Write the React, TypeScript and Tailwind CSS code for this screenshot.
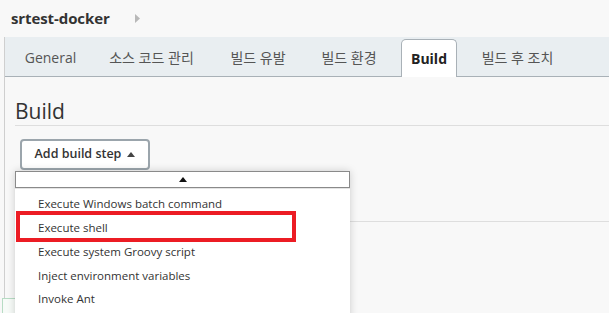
import React from "react";

const tabs = [
  { label: "General", w: "w-[67px]" },
  { label: "소스 코드 관리", w: "w-[109px]" },
  { label: "빌드 유발", w: "w-[78px]" },
  { label: "빌드 환경", w: "w-[78px]" },
  { label: "Build", w: "w-[56px]", active: true },
  { label: "빌드 후 조치", w: "w-[95px]" },
];

const items = [
  "Execute Windows batch command",
  "Execute shell",
  "Execute system Groovy script",
  "Inject environment variables",
  "Invoke Ant",
];

export default function App() {
  return (
    <div
      className="relative w-[609px] h-[313px] overflow-hidden bg-[#f8f8f8] text-[#333]"
      style={{ fontFamily: '"Open Sans", "Noto Sans CJK KR", sans-serif' }}
    >
      {/* top bar */}
      <div className="h-[37px] flex items-center pl-[11px]">
        <span className="text-[15px] font-bold text-[#333] tracking-[-0.1px]">srtest-docker</span>
        <svg width="5" height="9" viewBox="0 0 5 9" className="ml-[25px] mt-[-1px]">
          <path d="M0 0 L5 4.5 L0 9 Z" fill="#b8b8b8" />
        </svg>
      </div>

      <div className="ml-[4px] border-l border-[#cfcfcf] h-[276px]">
        {/* tab bar */}
        <div className="h-[40px] bg-[#e9eef1] border-b border-[#a9b1b7] flex items-end pl-[12px] gap-[13px]">
          {tabs.map((t) =>
            t.active ? (
              <div
                key={t.label}
                className={`${t.w} h-[38px] -mb-px bg-white border border-b-0 border-[#a9b1b7] rounded-t-[5px] flex items-center justify-center text-[14px] font-bold text-[#222]`}
              >
                {t.label}
              </div>
            ) : (
              <div
                key={t.label}
                className={`${t.w} h-[37px] flex items-center justify-center text-[14px] text-[#555]`}
              >
                {t.label}
              </div>
            )
          )}
        </div>

        {/* content */}
        <div className="pl-[10px] relative">
          <div className="pt-[20px] h-[49px] border-b border-[#dedede] text-[21px] leading-[28px] text-[#333]">
            Build
          </div>
          <div className="relative h-[96px] border-b border-[#dedede]">
            <div className="absolute left-[5px] top-[13px] w-[130px] h-[31px] border-2 border-[#9ba5ac] rounded-[4px] bg-white flex items-center justify-center gap-[6px] text-[12.5px] font-semibold text-[#333]">
              <span>Add build step</span>
              <svg width="8" height="5" viewBox="0 0 8 5">
                <path d="M0 5 L4 0 L8 5 Z" fill="#444" />
              </svg>
            </div>
          </div>

          {/* dropdown menu */}
          <div className="absolute left-[10px] top-[94px] w-[335px] z-10 shadow-[0_0_8px_rgba(0,0,0,0.18)] bg-white">
            <div className="h-[17px] border border-[#8a8a8a] flex items-center justify-center">
              <svg width="8" height="5" viewBox="0 0 8 5">
                <path d="M0 5 L4 0 L8 5 Z" fill="#111" />
              </svg>
            </div>
            <div className="border-t border-[#e4e4e4] pt-[3px] h-[140px]">
              {items.map((it, i) => (
                <div
                  key={it}
                  className="relative h-[23.75px] flex items-center pl-[23px] text-[11.5px] text-[#333]"
                >
                  {i === 1 && (
                    <div className="absolute left-[1px] top-0 w-[280px] h-[31px] -mt-[5px] border-[4px] border-[#ec1c24]" />
                  )}
                  <span className="relative">{it}</span>
                </div>
              ))}
            </div>
          </div>
        </div>
      </div>

      {/* partial green box bottom-left */}
      <div className="absolute left-[2px] top-[298px] w-[16px] h-[20px] border border-[#b7dcc4] bg-[#f7fbf8]" />
    </div>
  );
}
